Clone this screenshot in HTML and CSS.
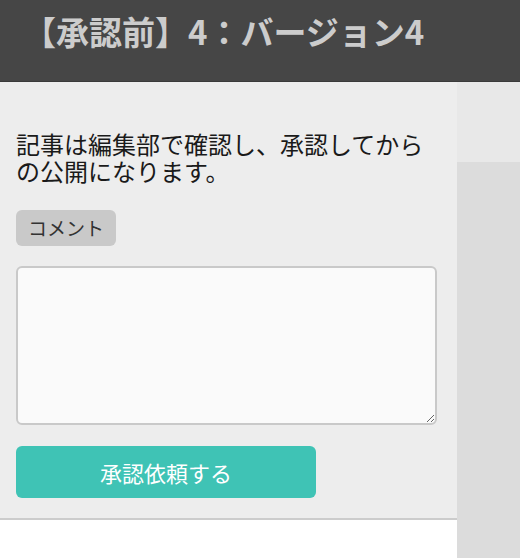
FILE: index.html
```html
<!DOCTYPE html>
<html lang="ja">

<head>
    <meta http-equiv="Content-Type" content="text/html; charset=UTF-8">
    <meta name="viewport" content="width=device-width, initial-scale=1.0">
    <link rel="stylesheet" href="styles.css">
</head>

<body>
    <header class="title-bar">
        <h1 class="title">【承認前】4：バージョン4</h1>
    </header>

    <div class="layout">
        <div class="main">
            <form class="panel" id="approveForm">
                <p class="notice">記事は編集部で確認し、承認してからの公開になります。</p>
                <label class="tag" for="comment">コメント</label>
                <textarea class="comment" id="comment" name="comment"></textarea>
                <button type="submit" class="btn">承認依頼する</button>
            </form>
        </div>
        <aside class="side">
            <div class="side-top"></div>
        </aside>
    </div>
</body>

</html>
```

FILE: styles.css
```css
html,
body {
    height: 100%;
}

body {
    margin: 0;
    font-family: "Noto Sans CJK JP", "Noto Sans", sans-serif;
    background: #ffffff;
    display: flex;
    flex-direction: column;
}

.title-bar {
    background: #464646;
    height: 82px;
    box-sizing: border-box;
    padding: 0 0 0 23px;
    border-bottom: 1px solid #3a3a3a;
}

.title {
    margin: 0;
    font-size: 33px;
    line-height: 62px;
    font-weight: bold;
    color: #cccccc;
}

.layout {
    flex: 1;
    display: flex;
}

.main {
    width: 457px;
}

.panel {
    background: #ededed;
    padding: 48px 16px 20px;
    border-bottom: 2px solid #cccccc;
    display: flex;
    flex-direction: column;
    align-items: flex-start;
}

.notice {
    margin: 0 0 26px;
    font-size: 24px;
    line-height: 27px;
    color: #1a1a1a;
}

.tag {
    background: #c9c9c9;
    color: #333333;
    font-size: 19px;
    line-height: 36px;
    padding: 0 12px;
    border-radius: 6px;
    margin-bottom: 20px;
}

.comment {
    width: 421px;
    height: 159px;
    box-sizing: border-box;
    background: #fafafa;
    border: 2px solid #c9c9c9;
    border-radius: 6px;
    margin: 0 0 21px;
    font-family: inherit;
    font-size: 16px;
}

.btn {
    width: 300px;
    height: 52px;
    background: #3fc3b5;
    color: #ffffff;
    border: none;
    border-radius: 6px;
    font-family: inherit;
    font-size: 22px;
    cursor: pointer;
}

.side {
    flex: 1;
    background: #dcdcdc;
}

.side-top {
    height: 80px;
    background: #e8e8e8;
}
```
